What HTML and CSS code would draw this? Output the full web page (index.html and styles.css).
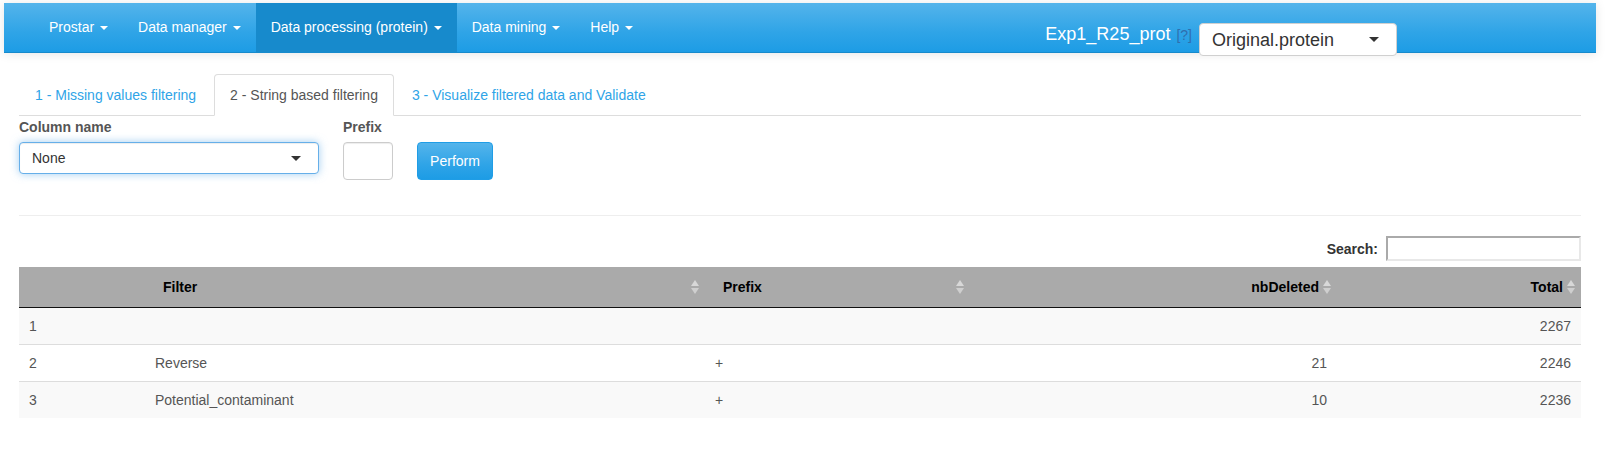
FILE: index.html
```html
<!DOCTYPE html>
<html lang="en">
<head>
    <meta charset="UTF-8">
    <title>Prostar - String based filtering</title>
    <link rel="stylesheet" href="styles.css">
</head>
<body>
    <div class="page">
        <nav class="navbar">
            <ul class="nav-menu">
                <li><a href="#">Prostar <span class="caret"></span></a></li>
                <li><a href="#">Data manager <span class="caret"></span></a></li>
                <li class="active"><a href="#">Data processing (protein) <span class="caret"></span></a></li>
                <li><a href="#">Data mining <span class="caret"></span></a></li>
                <li><a href="#">Help <span class="caret"></span></a></li>
            </ul>
            <div class="dataset">
                <div class="dataset-title">Exp1_R25_prot <span class="help">[?]</span></div>
                <div class="select nav-select">
                    <span>Original.protein</span>
                    <span class="caret dark"></span>
                </div>
            </div>
        </nav>

        <div class="content">
            <ul class="tabs">
                <li><a href="#">1 - Missing values filtering</a></li>
                <li class="active"><a href="#">2 - String based filtering</a></li>
                <li><a href="#">3 - Visualize filtered data and Validate</a></li>
            </ul>

            <div class="filter-form">
                <div class="field">
                    <label>Column name</label>
                    <div class="select column-select">
                        <span>None</span>
                        <span class="caret dark"></span>
                    </div>
                </div>
                <div class="field">
                    <label>Prefix</label>
                    <input class="prefix-input" type="text">
                </div>
                <button class="btn-perform">Perform</button>
            </div>

            <hr class="divider">

            <div class="search-row">
                <label>Search:</label>
                <input class="search-input" type="text">
            </div>

            <table class="data-table">
                <colgroup>
                    <col class="col-index">
                    <col class="col-filter">
                    <col class="col-prefix">
                    <col class="col-deleted">
                    <col class="col-total">
                </colgroup>
                <thead>
                    <tr>
                        <th></th>
                        <th class="sortable">Filter <svg class="sort-icon" viewBox="0 0 8 14"><path class="up" d="M0 6 L4 0 L8 6 Z"/><path class="down" d="M0 8 L8 8 L4 14 Z"/></svg></th>
                        <th class="sortable">Prefix <svg class="sort-icon" viewBox="0 0 8 14"><path class="up" d="M0 6 L4 0 L8 6 Z"/><path class="down" d="M0 8 L8 8 L4 14 Z"/></svg></th>
                        <th class="sortable num">nbDeleted <svg class="sort-icon" viewBox="0 0 8 14"><path class="up" d="M0 6 L4 0 L8 6 Z"/><path class="down" d="M0 8 L8 8 L4 14 Z"/></svg></th>
                        <th class="sortable num">Total <svg class="sort-icon" viewBox="0 0 8 14"><path class="up" d="M0 6 L4 0 L8 6 Z"/><path class="down" d="M0 8 L8 8 L4 14 Z"/></svg></th>
                    </tr>
                </thead>
                <tbody>
                    <tr>
                        <td>1</td>
                        <td></td>
                        <td></td>
                        <td class="num"></td>
                        <td class="num">2267</td>
                    </tr>
                    <tr>
                        <td>2</td>
                        <td>Reverse</td>
                        <td>+</td>
                        <td class="num">21</td>
                        <td class="num">2246</td>
                    </tr>
                    <tr>
                        <td>3</td>
                        <td>Potential_contaminant</td>
                        <td>+</td>
                        <td class="num">10</td>
                        <td class="num">2236</td>
                    </tr>
                </tbody>
            </table>
        </div>
    </div>
</body>
</html>
```

FILE: styles.css
```css
* {
    box-sizing: border-box;
}

body {
    margin: 0;
    padding-top: 3px;
    font-family: "Liberation Sans", Arial, sans-serif;
    font-size: 14px;
    line-height: 20px;
    color: #555;
    background: #fff;
}

.page {
    margin: 0 10px 0 4px;
}

/* top navbar */
.navbar {
    display: flex;
    align-items: flex-start;
    height: 50px;
    background: linear-gradient(#54b4eb, #2fa4e7 60%, #1d9ce5);
    border-bottom: 1px solid #178acc;
    box-shadow: 0 1px 10px rgba(0,0,0,0.1);
    margin-bottom: 21px;
    padding-left: 30px;
}

.nav-menu {
    display: flex;
    list-style: none;
    margin: 0;
    padding: 0;
}

.nav-menu a {
    display: block;
    padding: 15px;
    line-height: 19px;
    color: #fff;
    text-decoration: none;
}

.nav-menu .active a {
    background: #178acc;
}

.caret {
    display: inline-block;
    width: 0;
    height: 0;
    margin-left: 2px;
    vertical-align: middle;
    border-top: 4px solid #fff;
    border-left: 4px solid transparent;
    border-right: 4px solid transparent;
}

.caret.dark {
    border-top: 5px solid #333;
    border-left: 5px solid transparent;
    border-right: 5px solid transparent;
    margin-left: 0;
}

.dataset {
    display: flex;
    align-items: flex-start;
    margin-left: auto;
    margin-right: 199px;
}

.dataset-title {
    margin-top: 21px;
    font-size: 18px;
    line-height: 20px;
    color: #fff;
}

.help {
    font-size: 14px;
    color: #2f6faf;
    margin-left: 1px;
}

.select {
    display: flex;
    align-items: center;
    justify-content: space-between;
    background: #fff;
    border: 1px solid #ccc;
    border-radius: 4px;
    color: #333;
    padding: 0 17px 0 12px;
}

.nav-select {
    width: 198px;
    height: 33px;
    margin: 20px 0 0 7px;
    font-size: 18px;
    line-height: 20px;
    border-color: #d0d0d0;
}

/* page content */
.content {
    padding: 0 15px;
}

.tabs {
    display: flex;
    list-style: none;
    margin: 0;
    padding: 0;
    border-bottom: 1px solid #ddd;
}

.tabs li {
    margin: 0 2px -1px 0;
}

.tabs a {
    display: block;
    padding: 10px 15px;
    border: 1px solid transparent;
    border-radius: 4px 4px 0 0;
    color: #2fa4e7;
    text-decoration: none;
}

.tabs .active a {
    color: #555;
    background: #fff;
    border-color: #ddd #ddd transparent;
}

.filter-form {
    display: flex;
    align-items: flex-start;
    gap: 24px;
    margin-top: 1px;
}

.field label {
    display: block;
    font-weight: bold;
    margin-bottom: 5px;
}

.column-select {
    width: 300px;
    height: 32px;
    border-color: #66afe9;
    box-shadow: inset 0 1px 1px rgba(0,0,0,0.075), 0 0 8px rgba(102,175,233,0.6);
}

.prefix-input {
    display: block;
    width: 50px;
    height: 38px;
    border: 1px solid #ccc;
    border-radius: 4px;
    box-shadow: inset 0 1px 1px rgba(0,0,0,0.075);
}

.btn-perform {
    margin-top: 25px;
    width: 76px;
    height: 38px;
    font-family: inherit;
    font-size: 14px;
    color: #fff;
    background: linear-gradient(#54b4eb, #2fa4e7 60%, #1d9ce5);
    border: 1px solid #1f9de6;
    border-radius: 4px;
}

.divider {
    margin: 35px 0 20px;
    border: 0;
    border-top: 1px solid #eee;
}

.search-row {
    display: flex;
    justify-content: flex-end;
    align-items: center;
    gap: 8px;
    margin-bottom: 6px;
}

.search-row label {
    font-weight: bold;
    color: #333;
}

.search-input {
    width: 195px;
    height: 25px;
    border: 2px solid #e8e8e8;
    border-top-color: #aaa;
    border-left-color: #aaa;
}

/* results table */
.data-table {
    width: 100%;
    table-layout: fixed;
    border-collapse: collapse;
}

.col-index { width: 126px; }
.col-filter { width: 560px; }
.col-prefix { width: 265px; }
.col-deleted { width: 367px; }
.col-total { width: 244px; }

.data-table th {
    position: relative;
    background: #aaa;
    color: #000;
    font-weight: bold;
    text-align: left;
    padding: 10px 18px;
    border-bottom: 1px solid #111;
}

.data-table td {
    padding: 8px 10px;
    border-top: 1px solid #ddd;
    color: #555;
}

.data-table tbody tr:first-child td {
    border-top: none;
}

.data-table tbody tr:nth-child(odd) {
    background: #f9f9f9;
}

.data-table .num {
    text-align: right;
}

.sort-icon {
    position: absolute;
    right: 6px;
    top: 13px;
    width: 8px;
    height: 14px;
}

.sort-icon .up {
    fill: #d8d8d8;
}

.sort-icon .down {
    fill: #cfcfcf;
}
```
